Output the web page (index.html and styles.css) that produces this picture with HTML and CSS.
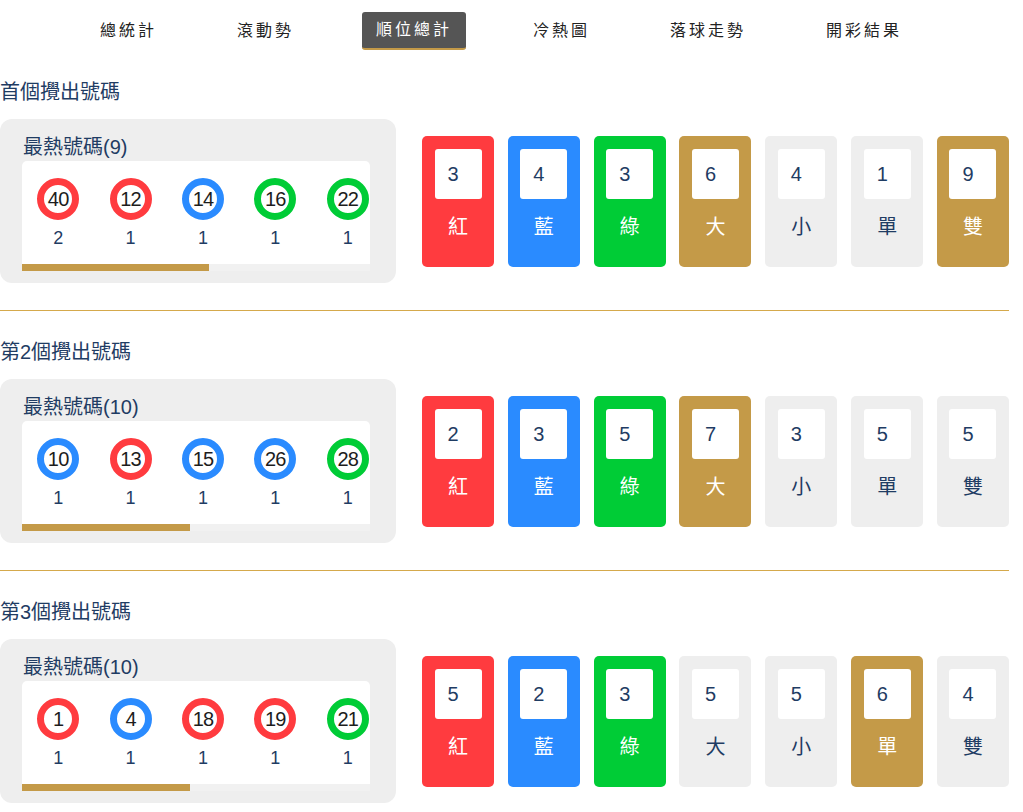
FILE: index.html
```html
<!DOCTYPE html>
<html lang="zh-Hant">
<head>
<meta charset="utf-8">
<title>順位總計</title>
<link rel="stylesheet" href="styles.css">
</head>
<body>
<div class="page">
  <nav class="nav">
    <a class="nav-item">總統計</a>
    <a class="nav-item">滾動勢</a>
    <a class="nav-item active">順位總計</a>
    <a class="nav-item">冷熱圖</a>
    <a class="nav-item">落球走勢</a>
    <a class="nav-item">開彩結果</a>
  </nav>

  <section class="section">
    <h2 class="sec-title">首個攪出號碼</h2>
    <div class="row">
      <div class="hot">
        <div class="hot-title">最熱號碼(9)</div>
        <div class="hot-panel">
          <div class="balls">
            <div class="cell"><span class="ball red">40</span><span class="cnt">2</span></div>
            <div class="cell"><span class="ball red">12</span><span class="cnt">1</span></div>
            <div class="cell"><span class="ball blue">14</span><span class="cnt">1</span></div>
            <div class="cell"><span class="ball green">16</span><span class="cnt">1</span></div>
            <div class="cell"><span class="ball green">22</span><span class="cnt">1</span></div>
          </div>
          <div class="track"><div class="thumb" style="width:53.7%"></div></div>
        </div>
      </div>
      <div class="cards">
        <div class="card c-red"><div class="num">3</div><div class="lbl">紅</div></div>
        <div class="card c-blue"><div class="num">4</div><div class="lbl">藍</div></div>
        <div class="card c-green"><div class="num">3</div><div class="lbl">綠</div></div>
        <div class="card c-gold"><div class="num">6</div><div class="lbl">大</div></div>
        <div class="card c-grey"><div class="num">4</div><div class="lbl">小</div></div>
        <div class="card c-grey"><div class="num">1</div><div class="lbl">單</div></div>
        <div class="card c-gold"><div class="num">9</div><div class="lbl">雙</div></div>
      </div>
    </div>
  </section>

  <section class="section">
    <h2 class="sec-title">第2個攪出號碼</h2>
    <div class="row">
      <div class="hot">
        <div class="hot-title">最熱號碼(10)</div>
        <div class="hot-panel">
          <div class="balls">
            <div class="cell"><span class="ball blue">10</span><span class="cnt">1</span></div>
            <div class="cell"><span class="ball red">13</span><span class="cnt">1</span></div>
            <div class="cell"><span class="ball blue">15</span><span class="cnt">1</span></div>
            <div class="cell"><span class="ball blue">26</span><span class="cnt">1</span></div>
            <div class="cell"><span class="ball green">28</span><span class="cnt">1</span></div>
          </div>
          <div class="track"><div class="thumb" style="width:48.2%"></div></div>
        </div>
      </div>
      <div class="cards">
        <div class="card c-red"><div class="num">2</div><div class="lbl">紅</div></div>
        <div class="card c-blue"><div class="num">3</div><div class="lbl">藍</div></div>
        <div class="card c-green"><div class="num">5</div><div class="lbl">綠</div></div>
        <div class="card c-gold"><div class="num">7</div><div class="lbl">大</div></div>
        <div class="card c-grey"><div class="num">3</div><div class="lbl">小</div></div>
        <div class="card c-grey"><div class="num">5</div><div class="lbl">單</div></div>
        <div class="card c-grey"><div class="num">5</div><div class="lbl">雙</div></div>
      </div>
    </div>
  </section>

  <section class="section">
    <h2 class="sec-title">第3個攪出號碼</h2>
    <div class="row">
      <div class="hot">
        <div class="hot-title">最熱號碼(10)</div>
        <div class="hot-panel">
          <div class="balls">
            <div class="cell"><span class="ball red">1</span><span class="cnt">1</span></div>
            <div class="cell"><span class="ball blue">4</span><span class="cnt">1</span></div>
            <div class="cell"><span class="ball red">18</span><span class="cnt">1</span></div>
            <div class="cell"><span class="ball red">19</span><span class="cnt">1</span></div>
            <div class="cell"><span class="ball green">21</span><span class="cnt">1</span></div>
          </div>
          <div class="track"><div class="thumb" style="width:48.2%"></div></div>
        </div>
      </div>
      <div class="cards">
        <div class="card c-red"><div class="num">5</div><div class="lbl">紅</div></div>
        <div class="card c-blue"><div class="num">2</div><div class="lbl">藍</div></div>
        <div class="card c-green"><div class="num">3</div><div class="lbl">綠</div></div>
        <div class="card c-grey"><div class="num">5</div><div class="lbl">大</div></div>
        <div class="card c-grey"><div class="num">5</div><div class="lbl">小</div></div>
        <div class="card c-gold"><div class="num">6</div><div class="lbl">單</div></div>
        <div class="card c-grey"><div class="num">4</div><div class="lbl">雙</div></div>
      </div>
    </div>
  </section>
</div>
</body>
</html>
```

FILE: styles.css
```css
* { box-sizing: border-box; }

html, body {
  margin: 0;
  padding: 0;
  background: #ffffff;
}

body {
  font-family: "Liberation Sans", "Noto Sans CJK TC", Arial, sans-serif;
  color: #1f3c63;
}

.page {
  width: 1009px;
}

/* ---------- nav ---------- */
.nav {
  display: flex;
  justify-content: flex-start;
  align-items: center;
  gap: 54px;
  padding-top: 12px;
  padding-left: 87px;
  height: 50px;
}

.nav-item {
  display: block;
  height: 38px;
  line-height: 38px;
  padding: 0 13px;
  font-size: 16px;
  letter-spacing: 3px;
  color: #222222;
  border-radius: 3px;
  cursor: pointer;
}

.nav-item.active {
  background: #555555;
  color: #ffffff;
  border-bottom: 2px solid #c49a48;
  line-height: 36px;
  padding: 0 14px 0 14px;
  margin-left: 1px;
}

/* ---------- sections ---------- */
.section {
  padding-top: 30px;
  padding-bottom: 27px;
  border-bottom: 1px solid #d5a94c;
}

.section + .section {
  padding-top: 29px;
}

.section:last-child {
  border-bottom: none;
}

.sec-title {
  margin: 0 0 15px 0;
  font-size: 20px;
  line-height: 24px;
  font-weight: normal;
  color: #1f3c63;
}

.row {
  display: flex;
  align-items: center;
}

/* ---------- hot numbers box ---------- */
.hot {
  width: 396px;
  flex-shrink: 0;
  height: 164px;
  background: #eeeeee;
  border-radius: 12px;
  padding: 16px 26px 12px 22px;
}

.hot-title {
  font-size: 20px;
  line-height: 24px;
  margin-bottom: 2px;
  padding-left: 1px;
  color: #1f3c63;
}

.hot-panel {
  background: #ffffff;
  border-radius: 5px 5px 0 0;
  height: 110px;
  overflow: hidden;
  display: flex;
  flex-direction: column;
}

.balls {
  display: flex;
  flex: 1;
  overflow: hidden;
}

.cell {
  width: 72.4px;
  flex-shrink: 0;
  display: flex;
  flex-direction: column;
  align-items: center;
  padding-top: 17px;
}

.ball {
  width: 42px;
  height: 42px;
  border-radius: 50%;
  border: 7px solid #ff3b3f;
  background: #ffffff;
  display: flex;
  align-items: center;
  justify-content: center;
  font-size: 20px;
  color: #1d1d1d;
  letter-spacing: -0.8px;
}

.ball.red { border-color: #ff3b3f; }
.ball.blue { border-color: #2a8bff; }
.ball.green { border-color: #00cc36; }

.cnt {
  margin-top: 8px;
  font-size: 18px;
  line-height: 20px;
  color: #1f3c63;
}

.track {
  height: 7px;
  background: #f1f1f1;
  flex-shrink: 0;
}

.thumb {
  height: 100%;
  background: #c49a48;
}

/* ---------- cards ---------- */
.cards {
  flex: 1;
  margin-left: 26px;
  display: flex;
  justify-content: space-between;
}

.card {
  width: 72px;
  height: 131px;
  border-radius: 5px;
  padding-top: 13px;
  display: flex;
  flex-direction: column;
  align-items: center;
}

.num {
  width: 47px;
  height: 50px;
  background: #ffffff;
  border-radius: 3px;
  padding-left: 13px;
  font-size: 20px;
  line-height: 50px;
  color: #1f3c63;
}

.lbl {
  margin-top: 16px;
  font-size: 20px;
  line-height: 24px;
  color: #ffffff;
}

.c-red { background: #ff3b3f; }
.c-blue { background: #2a8bff; }
.c-green { background: #00cc36; }
.c-gold { background: #c49a48; }
.c-grey { background: #eeeeee; }
.c-grey .lbl { color: #1f3c63; }
```
